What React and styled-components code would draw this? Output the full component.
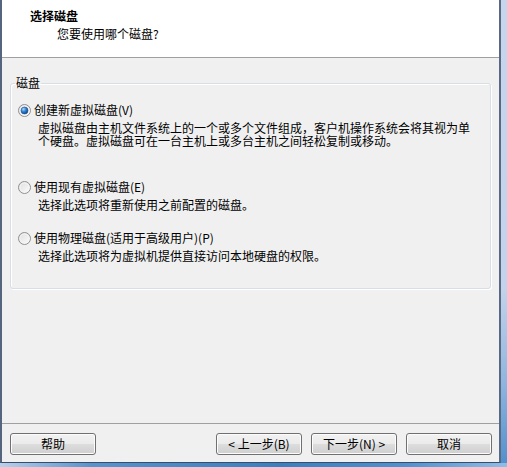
import React from 'react';
import styled, { createGlobalStyle } from 'styled-components';

const GlobalStyle = createGlobalStyle`
  html, body {
    margin: 0;
    padding: 0;
    background: #ffffff;
  }
  body {
    font-family: "Noto Sans CJK SC", "Noto Sans", sans-serif;
    font-size: 12px;
    color: #000;
  }
`

const Frame = styled.div`
  width: 507px;
  height: 467px;
  box-sizing: border-box;
  padding: 0 6px 4px 0;
  background:
    linear-gradient(to right, #b9d0ea 0%, #5694cc 18%, #3a80c0 55%, #4e92cf 80%, #8fbde6 100%) left bottom / 100% 4px no-repeat,
    linear-gradient(to bottom, #c6d6ed 0%, #c2d3eb 62%, #8fb5df 82%, #4f8fcb 100%);
`

const Window = styled.div`
  height: 100%;
  box-sizing: border-box;
  display: flex;
  flex-direction: column;
  border-left: 2px solid #56657e;
  border-right: 2px solid #5a6983;
  border-bottom: 1px solid #3b4c68;
  background: #f0f0f0;
`

const Header = styled.div`
  height: 58px;
  box-sizing: border-box;
  background: #ffffff;
  border-bottom: 1px solid #a0a0a0;
  padding: 9px 0 0 28px;
`

const Title = styled.div`
  font-weight: 700;
  line-height: 14px;
`

const Subtitle = styled.div`
  line-height: 14px;
  margin: 4px 0 0 27px;
`

const Body = styled.div`
  flex: 1;
  padding: 18px 8px 0 8px;
`

const GroupBox = styled.fieldset`
  margin: 0;
  padding: 13px 0 26px 0;
  border: 1px solid #d5dfe5;
  border-radius: 3px;
  box-shadow: inset 1px 1px 0 #ffffff, 1px 1px 0 #ffffff;
  min-width: 0;
`

const Legend = styled.legend`
  margin-left: 4px;
  padding: 0 1px;
  line-height: 14px;
`

const Option = styled.div`
  margin: 0 0 ${p => (p.$tall ? 33 : 20)}px 7px;
  &:last-child {
    margin-bottom: 0;
  }
`

const OptionLabel = styled.label`
  display: flex;
  align-items: center;
  gap: 3px;
  line-height: 14px;
  height: 14px;
`

const Description = styled.div`
  margin: 4px 0 0 20px;
  width: 436px;
  line-height: 13px;
`

const Footer = styled.div`
  display: flex;
  gap: 9px;
  border-top: 1px solid #a0a0a0;
  padding: 9px 7px 7px 8px;
`

const Spacer = styled.div`
  flex: 1;
`

const Button = styled.button`
  width: 86px;
  height: 22px;
  box-sizing: border-box;
  padding: 0;
  font: inherit;
  font-size: 12px;
  line-height: 18px;
  color: #000;
  border: 1px solid #707070;
  border-radius: 3px;
  background: linear-gradient(to bottom, #f2f2f2 0%, #ebebeb 49%, #dddddd 50%, #cfcfcf 100%);
  box-shadow: inset 0 0 0 1px #fcfcfc;
`

function Radio({ checked }) {
  return (
    <svg width="13" height="13" viewBox="0 0 13 13">
      <defs>
        <linearGradient id="rb" x1="0" y1="0" x2="1" y2="1">
          <stop offset="0" stopColor="#dcdcdc" />
          <stop offset="1" stopColor="#fefefe" />
        </linearGradient>
        <radialGradient id="rd" cx="0.35" cy="0.3" r="0.75">
          <stop offset="0" stopColor="#a9dcfb" />
          <stop offset="0.5" stopColor="#2f7fd0" />
          <stop offset="1" stopColor="#0d3f86" />
        </radialGradient>
      </defs>
      <circle cx="6.5" cy="6.5" r="6" fill="url(#rb)" stroke="#8e8f8f" strokeWidth="1" />
      <circle cx="6.5" cy="6.5" r="4.5" fill="none" stroke="#f4f4f4" strokeWidth="1" />
      {checked && <circle cx="6.5" cy="6.5" r="3.5" fill="url(#rd)" stroke="#184f90" strokeWidth="0.6" />}
    </svg>
  )
}

const options = [
  {
    label: '创建新虚拟磁盘(V)',
    desc: '虚拟磁盘由主机文件系统上的一个或多个文件组成，客户机操作系统会将其视为单个硬盘。虚拟磁盘可在一台主机上或多台主机之间轻松复制或移动。',
    checked: true,
    tall: true
  },
  {
    label: '使用现有虚拟磁盘(E)',
    desc: '选择此选项将重新使用之前配置的磁盘。'
  },
  {
    label: '使用物理磁盘(适用于高级用户)(P)',
    desc: '选择此选项将为虚拟机提供直接访问本地硬盘的权限。'
  }
]

export default function App() {
  return (
    <Frame>
      <GlobalStyle />
      <Window>
        <Header>
          <Title>选择磁盘</Title>
          <Subtitle>您要使用哪个磁盘?</Subtitle>
        </Header>
        <Body>
          <GroupBox>
            <Legend>磁盘</Legend>
            {options.map(o => (
              <Option key={o.label} $tall={o.tall}>
                <OptionLabel>
                  <Radio checked={o.checked} />
                  {o.label}
                </OptionLabel>
                <Description>{o.desc}</Description>
              </Option>
            ))}
          </GroupBox>
        </Body>
        <Footer>
          <Button>帮助</Button>
          <Spacer />
          <Button>&lt; 上一步(B)</Button>
          <Button>下一步(N) &gt;</Button>
          <Button>取消</Button>
        </Footer>
      </Window>
    </Frame>
  )
}
